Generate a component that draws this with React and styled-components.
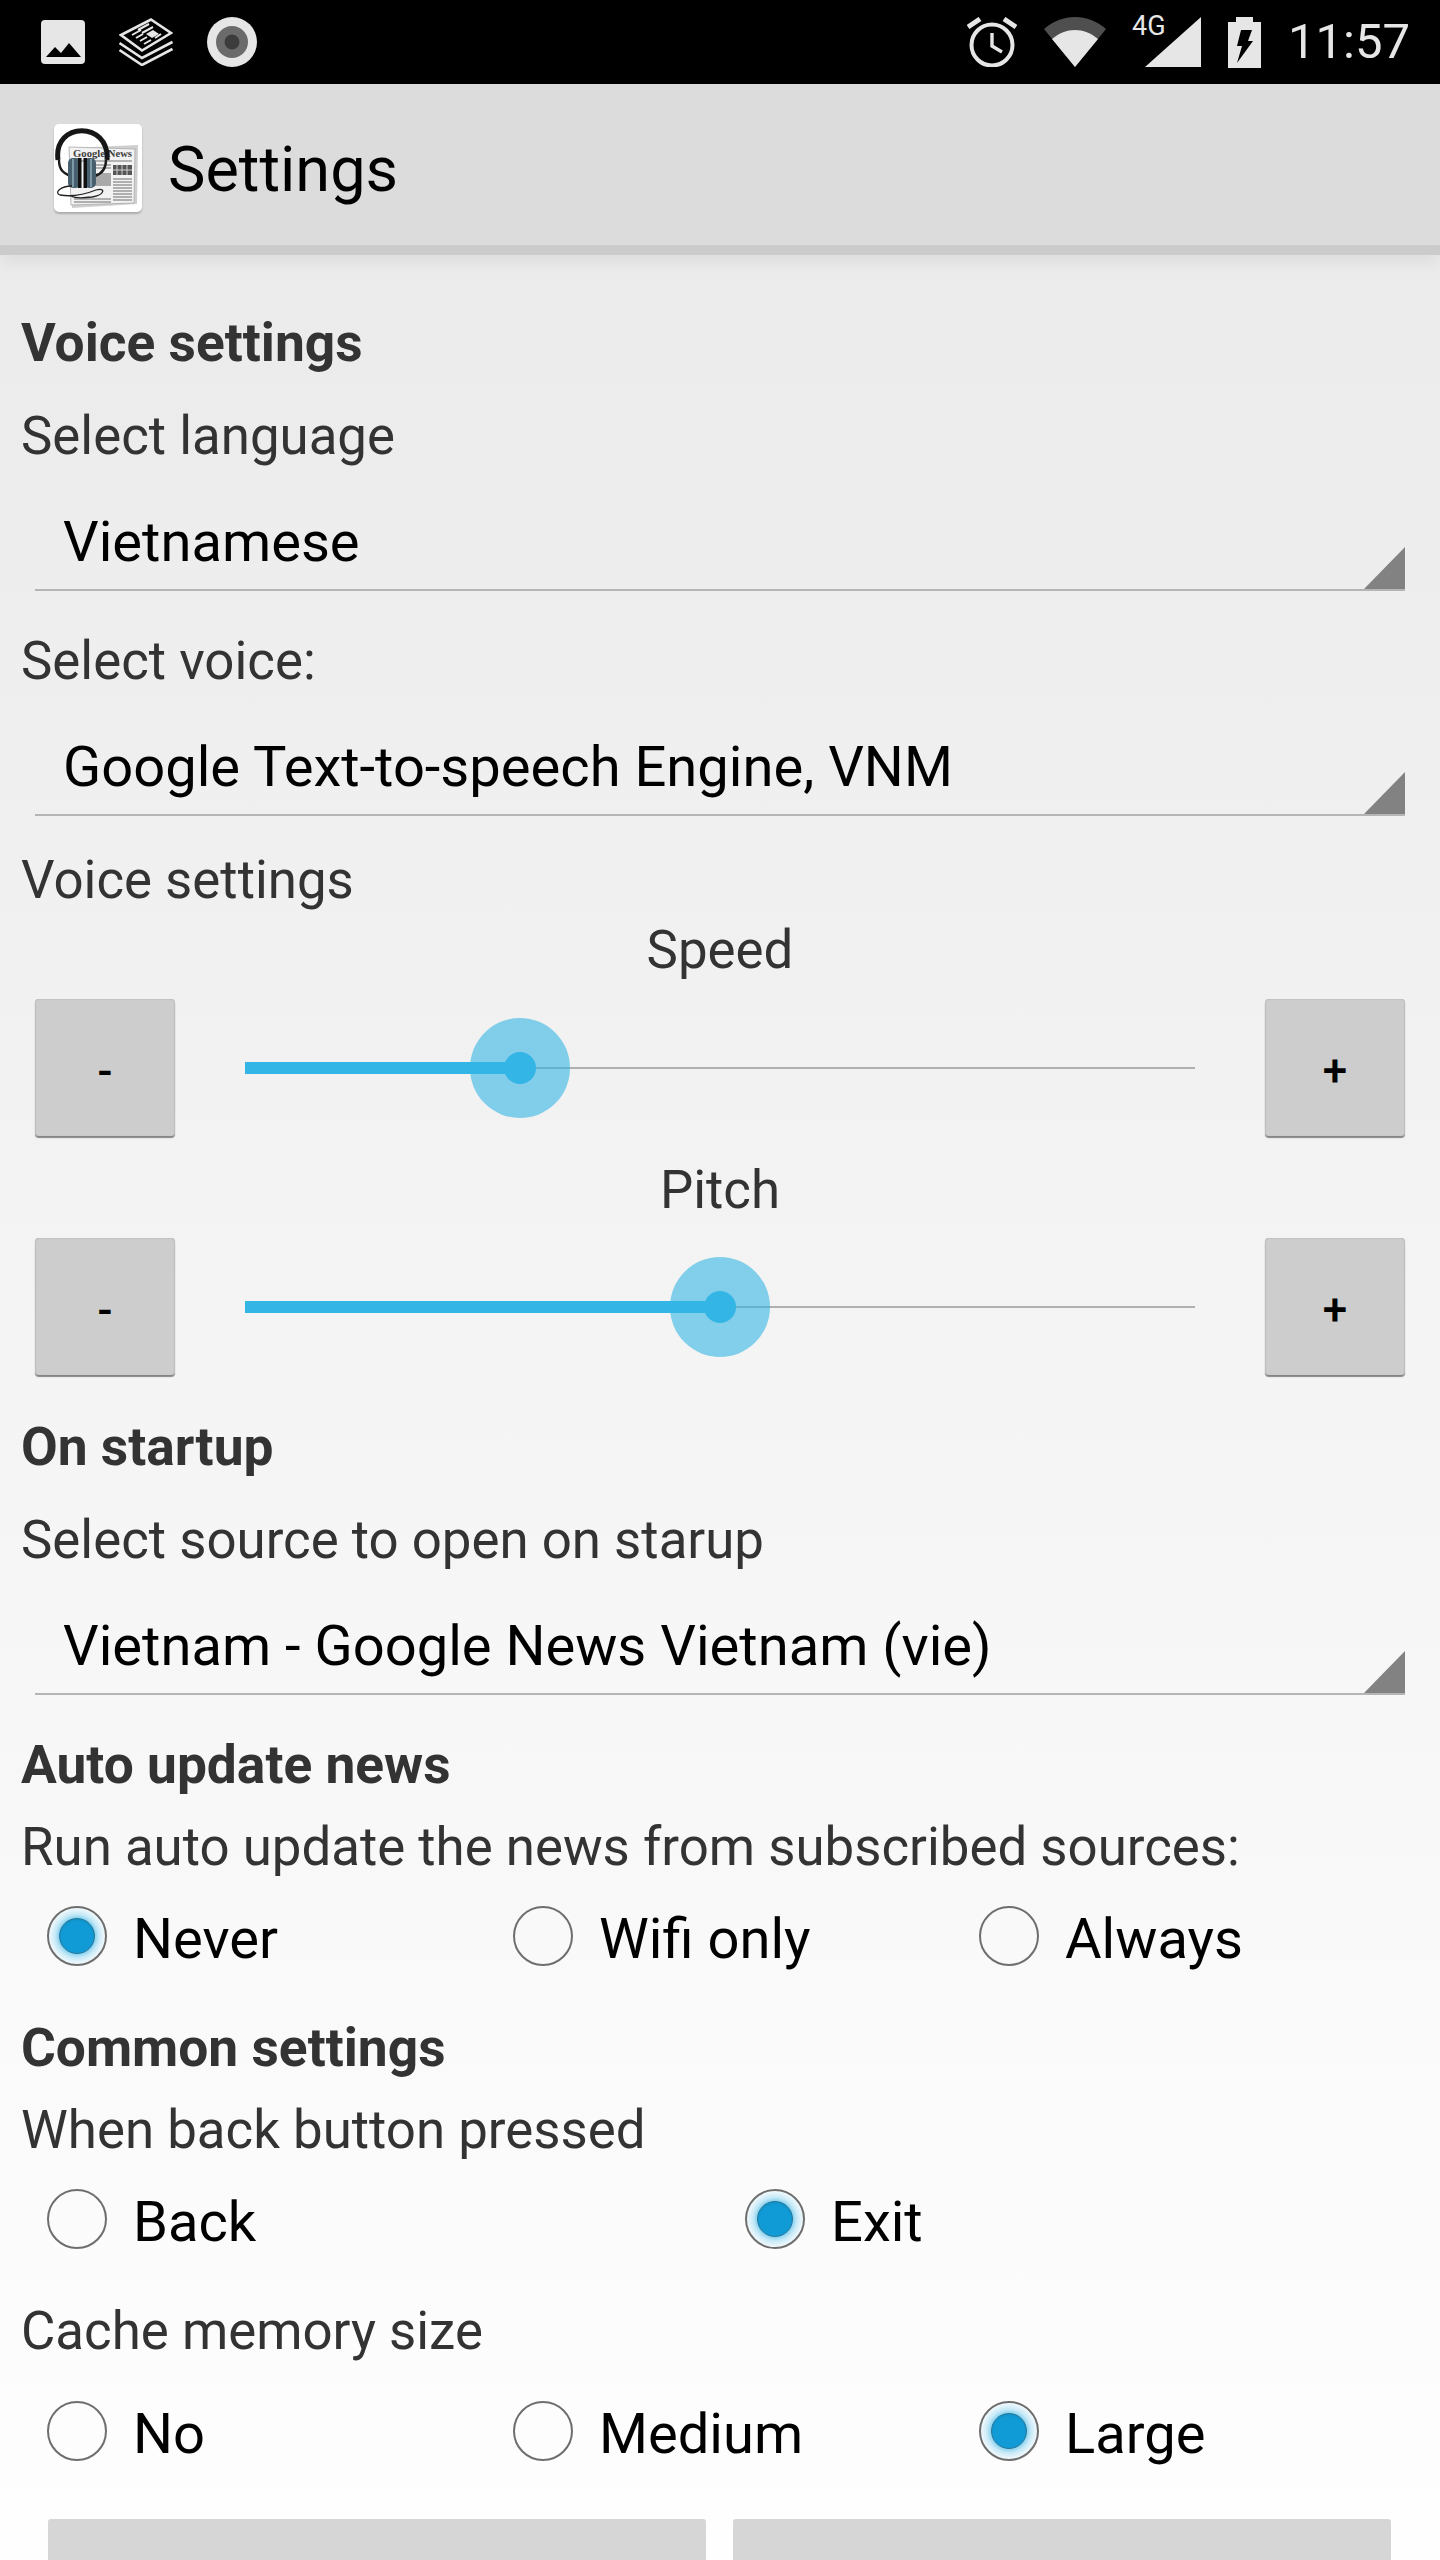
import styled, { createGlobalStyle } from 'styled-components'

const GlobalStyle = createGlobalStyle`
  html, body {
    margin: 0;
    padding: 0;
    background: #fff;
  }
  * {
    box-sizing: border-box;
  }
`

function ImageNote() {
  return (
    <svg width='44' height='44' viewBox='0 0 44 44'>
      <rect width='44' height='44' rx='4' fill='#e6e6e6' />
      <path d='M5 37 L14 27 L20 33 L28 23 L40 37 Z' fill='#000' />
    </svg>
  )
}

function NewsNote() {
  return (
    <svg width='54' height='48' viewBox='0 0 54 48' fill='none'>
      <path d='M0.5 32 L23 47 L53.5 31' stroke='#e6e6e6' strokeWidth='2.6' />
      <path d='M0.5 25 L23 40 L53.5 24' stroke='#e6e6e6' strokeWidth='2.6' />
      <path d='M32 1.5 L52 15 L23 32.5 L2 17 Z' fill='#000' stroke='#e6e6e6' strokeWidth='2.6' />
      <path d='M19 12 L30 6 M23 15 L34 9 M13 17 L22 12 M17 20 L24 16 M21 23 L28 19 M25 26 L32 22 M36 20 L42 16' stroke='#e6e6e6' strokeWidth='2' />
      <path d='M27 16 L34 12 L40 16 L33 20 Z' fill='#e6e6e6' />
    </svg>
  )
}

function RecordNote() {
  return (
    <svg width='50' height='50' viewBox='0 0 50 50'>
      <circle cx='25' cy='25' r='25' fill='#e6e6e6' />
      <circle cx='25' cy='25' r='16' fill='#6b6b6b' />
      <circle cx='25' cy='25' r='7.5' fill='#3c3c3c' />
    </svg>
  )
}

function AlarmIcon() {
  return (
    <svg width='50' height='50' viewBox='0 0 50 50' fill='none' stroke='#e6e6e6'>
      <circle cx='25' cy='28' r='20.5' strokeWidth='4' />
      <path d='M25 16 V29 L35 35' strokeWidth='3.4' />
      <path d='M1 10 L13 2 M49 10 L37 2' strokeWidth='5' />
    </svg>
  )
}

function WifiIcon() {
  return (
    <svg width='62' height='50' viewBox='0 0 62 50'>
      <path d='M0 12 C18 -4 44 -4 62 12 L31 50 Z' fill='#4f4f4f' />
      <path d='M8 22 C22 10 40 10 54 22 L31 50 Z' fill='#e6e6e6' />
    </svg>
  )
}

function SignalIcon() {
  return (
    <SignalWrap>
      <NetworkType>4G</NetworkType>
      <svg width='56' height='50' viewBox='0 0 56 50'>
        <path d='M56 0 V50 H0 Z' fill='#e6e6e6' />
      </svg>
    </SignalWrap>
  )
}

function BatteryIcon() {
  return (
    <svg width='33' height='51' viewBox='0 0 33 51'>
      <path d='M8 5 V0 H25 V5 H33 V51 H0 V5 Z' fill='#e6e6e6' />
      <path d='M13 13 H24 L20 24 H25 L9 46 L14 29 H9 Z' fill='#000' />
    </svg>
  )
}

function AppIcon() {
  return (
    <AppIconFrame>
      <svg width='88' height='88' viewBox='0 0 88 88'>
        <path d='M15 24 L84 21 L83 80 L18 84 Z' fill='#cfcfcf' />
        <path d='M15 23 L81 25 L80 79 L17 81 Z' fill='#f2f2f2' stroke='#aaa' strokeWidth='0.8' />
        <text
          x='19'
          y='33'
          fontFamily='Liberation Serif, serif'
          fontWeight='700'
          fontSize='11'
          textLength='59'
          lengthAdjust='spacingAndGlyphs'
          fill='#3f3f3f'
        >
          Google News
        </text>
        <path d='M20 37 H78' stroke='#777' strokeWidth='1.2' />
        <rect x='59' y='41' width='19' height='10' fill='#555' />
        <path d='M63 41 V51 M68 41 V51 M73 41 V51 M59 46 H78' stroke='#eee' strokeWidth='0.8' />
        <path d='M59 55 H78 M59 58 H78 M59 61 H78 M59 64 H78 M59 67 H78 M59 70 H78 M59 73 H78 M59 76 H78' stroke='#999' strokeWidth='1.4' />
        <rect x='36' y='49' width='21' height='13' fill='#a9a9a9' />
        <path d='M38 41 H57 M38 44 H57 M20 75 H57 M20 78 H57' stroke='#999' strokeWidth='1.4' />
        <path d='M4 36 C-1 -3 56 -3 53 36' fill='none' stroke='#161616' strokeWidth='5' />
        <path d='M5 36 C5 48 12 50 16 52 M52 36 C52 46 47 50 41 52' fill='none' stroke='#1c1c1c' strokeWidth='2.4' />
        <rect x='14' y='34' width='13' height='30' rx='5' fill='#48606e' />
        <rect x='30' y='34' width='12' height='30' rx='5' fill='#48606e' />
        <rect x='18' y='35' width='2' height='28' fill='#7d98a6' />
        <rect x='36' y='35' width='2' height='28' fill='#7d98a6' />
        <rect x='24' y='34' width='3.5' height='30' fill='#111' />
        <rect x='29.5' y='34' width='3.5' height='30' fill='#111' />
        <path d='M18 62 C6 62 0 69 6 71 C18 73 32 70 42 66 C52 63 51 71 38 73 C30 74 22 75 17 72' fill='none' stroke='#222' strokeWidth='1.3' />
      </svg>
    </AppIconFrame>
  )
}

function Spinner({ value, $mt }) {
  return (
    <SpinnerRow $mt={$mt}>
      {value}
      <SpinnerArrow />
    </SpinnerRow>
  )
}

function SliderRow({ value, $mt }) {
  return (
    <SliderLine $mt={$mt}>
      <StepButton>-</StepButton>
      <Track>
        <Fill $value={value} />
        <Thumb $value={value} />
      </Track>
      <StepButton>+</StepButton>
    </SliderLine>
  )
}

function Radio({ label, checked }) {
  return (
    <RadioItem>
      <RadioCircle $checked={checked}>{checked && <RadioDot />}</RadioCircle>
      <RadioLabel>{label}</RadioLabel>
    </RadioItem>
  )
}

export default function App() {
  return (
    <Screen>
      <GlobalStyle />
      <StatusBar>
        <StatusLeft>
          <ImageNote />
          <NewsNote />
          <RecordNote />
        </StatusLeft>
        <StatusRight>
          <AlarmIcon />
          <WifiIcon />
          <SignalIcon />
          <BatteryIcon />
          <Clock>11:57</Clock>
        </StatusRight>
      </StatusBar>

      <ActionBar>
        <AppIcon />
        <BarTitle>Settings</BarTitle>
      </ActionBar>

      <Content>
        <Heading $mt={53}>Voice settings</Heading>
        <Label $mt={23}>Select language</Label>
        <Spinner value='Vietnamese' $mt={22} />
        <Label $mt={35}>Select voice:</Label>
        <Spinner value='Google Text-to-speech Engine, VNM' $mt={22} />
        <Label $mt={29}>Voice settings</Label>
        <SliderTitle>Speed</SliderTitle>
        <SliderRow value={28.9} $mt={13} />
        <SliderTitle $mt={17}>Pitch</SliderTitle>
        <SliderRow value={50} $mt={12} />
        <Heading $mt={35}>On startup</Heading>
        <Label $mt={23}>Select source to open on starup</Label>
        <Spinner value='Vietnam - Google News Vietnam (vie)' $mt={22} />
        <Heading $mt={35}>Auto update news</Heading>
        <Label $mt={12}>Run auto update the news from subscribed sources:</Label>
        <RadioGroup $mt={24} $column={466}>
          <Radio label='Never' checked />
          <Radio label='Wifi only' />
          <Radio label='Always' />
        </RadioGroup>
        <Heading $mt={47}>Common settings</Heading>
        <Label $mt={12}>When back button pressed</Label>
        <RadioGroup $mt={24} $column={698}>
          <Radio label='Back' />
          <Radio label='Exit' checked />
        </RadioGroup>
        <Label $mt={47}>Cache memory size</Label>
        <RadioGroup $mt={35} $column={466}>
          <Radio label='No' />
          <Radio label='Medium' />
          <Radio label='Large' checked />
        </RadioGroup>
        <BottomButtons>
          <BottomButton />
          <BottomButton />
        </BottomButtons>
      </Content>
    </Screen>
  )
}

const Screen = styled.div`
  width: 1440px;
  height: 2560px;
  overflow: hidden;
  display: flex;
  flex-direction: column;
  font-family: Roboto, sans-serif;
  background: #fff;
`

const StatusBar = styled.div`
  height: 84px;
  flex: none;
  background: #000;
  display: flex;
  align-items: center;
  justify-content: space-between;
  padding: 0 30px 0 41px;
`

const StatusLeft = styled.div`
  display: flex;
  align-items: center;
  gap: 34px;
`

const StatusRight = styled.div`
  display: flex;
  align-items: center;
  gap: 27px;
`

const SignalWrap = styled.div`
  position: relative;
  width: 68px;
  height: 50px;
  display: flex;
  justify-content: flex-end;
`

const NetworkType = styled.span`
  position: absolute;
  left: -1px;
  top: -6px;
  font-size: 27px;
  line-height: 30px;
  color: #e6e6e6;
`

const Clock = styled.span`
  font-size: 49px;
  line-height: 56px;
  color: #e6e6e6;
`

const ActionBar = styled.div`
  height: 171px;
  flex: none;
  position: relative;
  z-index: 1;
  display: flex;
  align-items: center;
  gap: 26px;
  padding: 7px 0 0 54px;
  background: #dcdcdc;
  border-bottom: 10px solid #cbcbcb;
  box-shadow: 0 10px 14px -2px rgba(0, 0, 0, 0.06);
`

const AppIconFrame = styled.div`
  width: 88px;
  height: 88px;
  flex: none;
  background: #fff;
  border-radius: 5px;
  box-shadow: 0 2px 2px rgba(0, 0, 0, 0.22);
`

const BarTitle = styled.h1`
  margin: 2px 0 0;
  font-size: 63px;
  font-weight: 400;
  color: #000;
`

const Content = styled.div`
  flex: 1;
  display: flex;
  flex-direction: column;
  background: linear-gradient(#ebebeb, #ffffff);
`

const Heading = styled.div`
  height: 70px;
  flex: none;
  margin-top: ${(p) => p.$mt || 0}px;
  padding-left: 21px;
  display: flex;
  align-items: center;
  font-size: 53.3px;
  font-weight: 700;
  color: #333;
`

const Label = styled.div`
  height: 70px;
  flex: none;
  margin-top: ${(p) => p.$mt || 0}px;
  padding-left: 21px;
  display: flex;
  align-items: center;
  font-size: 52.8px;
  color: #333;
`

const SliderTitle = styled(Label)`
  padding-left: 0;
  justify-content: center;
`

const SpinnerRow = styled.div`
  height: 98px;
  flex: none;
  position: relative;
  margin: ${(p) => p.$mt || 0}px 35px 0;
  padding: 2px 0 0 28px;
  display: flex;
  align-items: center;
  font-size: 56.1px;
  color: #000;
  border-bottom: 2px solid #b5b5b5;
`

const SpinnerArrow = styled.span`
  position: absolute;
  right: 0;
  bottom: 0;
  width: 41px;
  height: 42px;
  background: #828282;
  clip-path: polygon(100% 0, 100% 100%, 0 100%);
`

const SliderLine = styled.div`
  height: 140px;
  flex: none;
  margin: ${(p) => p.$mt || 0}px 35px 0;
  display: flex;
  align-items: center;
  justify-content: space-between;
`

const StepButton = styled.div`
  width: 140px;
  height: 137px;
  align-self: flex-start;
  margin-top: 1px;
  display: flex;
  align-items: center;
  justify-content: center;
  padding-top: 6px;
  font-size: 44px;
  font-weight: 500;
  color: #000;
  background: #cdcdcd;
  border-radius: 4px;
  box-shadow: 0 2px 1px #868686, inset 1px 0 1px #bdbdbd, inset -1px 0 1px #bdbdbd, inset 0 1px 1px #c2c2c2;
`

const Track = styled.div`
  width: 950px;
  height: 2px;
  position: relative;
  background: #b0b0b0;
`

const Fill = styled.div`
  position: absolute;
  left: 0;
  top: -5px;
  height: 12px;
  width: ${(p) => p.$value}%;
  background: #33b5e5;
`

const Thumb = styled.div`
  position: absolute;
  left: ${(p) => p.$value}%;
  top: 1px;
  width: 100px;
  height: 100px;
  margin: -50px 0 0 -50px;
  border-radius: 50%;
  background: rgba(51, 181, 229, 0.6);
  display: flex;
  align-items: center;
  justify-content: center;
  &::after {
    content: '';
    width: 32px;
    height: 32px;
    border-radius: 50%;
    background: #33b5e5;
  }
`

const RadioGroup = styled.div`
  height: 60px;
  flex: none;
  margin-top: ${(p) => p.$mt || 0}px;
  padding-left: 47px;
  display: grid;
  grid-auto-flow: column;
  grid-auto-columns: ${(p) => p.$column}px;
  justify-content: start;
`

const RadioItem = styled.div`
  height: 60px;
  display: flex;
  align-items: center;
  gap: 26px;
`

const RadioCircle = styled.div`
  width: 60px;
  height: 60px;
  flex: none;
  display: flex;
  align-items: center;
  justify-content: center;
  border-radius: 50%;
  border: 2.5px solid #6e6e6e;
  background: ${(p) =>
    p.$checked
      ? 'radial-gradient(circle closest-side, #7fd0ef 62%, #c7e9f7 78%, #f2fafd 100%)'
      : 'transparent'};
`

const RadioDot = styled.div`
  width: 36px;
  height: 36px;
  border-radius: 50%;
  background: radial-gradient(circle at 50% 55%, #119bd6 60%, #0d7fb0 100%);
  border: 1.5px solid #2a7596;
`

const RadioLabel = styled.span`
  padding-top: 6px;
  font-size: 56.1px;
  line-height: 54px;
  color: #000;
`

const BottomButtons = styled.div`
  flex: none;
  margin-top: 58px;
  padding: 0 48px;
  display: flex;
  gap: 27px;
`

const BottomButton = styled.div`
  width: 658px;
  height: 140px;
  background: #d6d6d6;
  border-radius: 3px;
`
